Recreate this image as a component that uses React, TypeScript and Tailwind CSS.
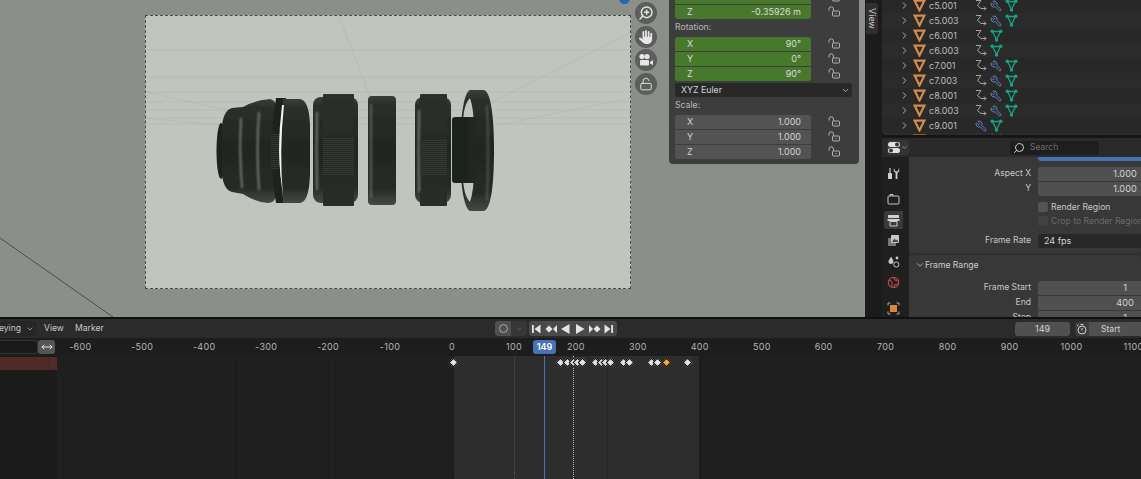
import React from 'react';
import { FaHand } from 'react-icons/fa6';
import { LockOpen, Search, ZoomIn, Wrench, ChevronDown, ChevronRight, MoveHorizontal } from 'lucide-react';

const FONT = "font-['Inter','Liberation_Sans',sans-serif]";

const LockIcon = () => (
    <svg width="13" height="11" viewBox="0 0 13 11" fill="none" stroke="#b4b4b4" strokeWidth="1">
        <path d="M1 4.5V3a2.2 2.2 0 0 1 4.4 0v2" />
        <rect x="4.5" y="5" width="7" height="5" rx="1" />
        <path d="M8 7v1" />
    </svg>
);

const NField = ({ label, value, green, edge }: { label: string; value: string; green?: boolean; edge?: string }) => (
    <div className="flex items-center h-[15px]">
        <div className={`w-[136px] h-[14px] flex items-center justify-between pl-[12px] pr-[10px] text-[9px] ${green ? "bg-[#48782c] text-[#dcdcdc]" : "bg-[#535353] text-[#d4d4d4]"} ${edge ?? ""}`}>
            <span>{label}</span>
            <span>{value}</span>
        </div>
        <div className="ml-[17px]"><LockIcon /></div>
    </div>
);

const TriObject = () => (
    <svg width="13" height="13" viewBox="0 0 13 13" fill="none" stroke="#d38c4a" strokeWidth="2.2">
        <path d="M1.6 1.6H11.4L6.5 11.4Z" />
    </svg>
);

const MeshData = () => (
    <svg width="13" height="13" viewBox="0 0 13 13" fill="none" stroke="#15a583" strokeWidth="1.3">
        <path d="M2.5 2.5H10.5L6.5 10.5Z" />
        <circle cx="2.2" cy="2.2" r="1.7" fill="#15a583" stroke="none" />
        <circle cx="10.8" cy="2.2" r="1.7" fill="#15a583" stroke="none" />
        <circle cx="6.5" cy="11" r="1.7" fill="#15a583" stroke="none" />
    </svg>
);

const AnimArrow = () => (
    <svg width="12" height="13" viewBox="0 0 12 13" fill="none" stroke="#a6a6a6" strokeWidth="1">
        <path d="M1 1.5H6L2.5 6.5 6 9.5H11M9 7.5l2 2-2 2" />
    </svg>
);

const Mod = () => <Wrench size={12} color="#6184c4" strokeWidth={2} className="-scale-x-100" />;

const outlinerRows = [
    { name: "c5.001", anim: true, mod: true },
    { name: "c5.003", anim: true, mod: true },
    { name: "c6.001", anim: true, mod: false },
    { name: "c6.003", anim: true, mod: false },
    { name: "c7.001", anim: true, mod: true },
    { name: "c7.003", anim: true, mod: true },
    { name: "c8.001", anim: true, mod: true },
    { name: "c8.003", anim: true, mod: true },
    { name: "c9.001", anim: false, mod: true },
    { name: "", anim: false, mod: true },
];

const ticks = [-600, -500, -400, -300, -200, -100, 0, 100, 200, 300, 400, 500, 600, 700, 800, 900, 1000, 1100];
const keys = [453, 560, 567, 573, 577, 582, 595, 601, 605, 610, 623, 629, 651, 657, 687];
const frameX = (f: number) => 452 + f * 0.6195;

const Lens = () => (
    <g>
        <defs>
            <linearGradient id="metal" x1="0" y1="0" x2="0" y2="1">
                <stop offset="0" stopColor="#3a3e3a" />
                <stop offset="0.08" stopColor="#2b2f2b" />
                <stop offset="0.45" stopColor="#232723" />
                <stop offset="0.85" stopColor="#262a26" />
                <stop offset="1" stopColor="#454a45" />
            </linearGradient>
            <linearGradient id="band" x1="0" y1="0" x2="0" y2="1">
                <stop offset="0" stopColor="#2c302c" />
                <stop offset="0.5" stopColor="#272b27" />
                <stop offset="1" stopColor="#292d29" />
            </linearGradient>
            <pattern id="knurl" width="3" height="2" patternUnits="userSpaceOnUse">
                <rect width="3" height="1" fill="#343834" />
            </pattern>
            <filter id="soft"><feGaussianBlur stdDeviation="0.9" /></filter>
            <filter id="softer"><feGaussianBlur stdDeviation="0.6" /></filter>
        </defs>

        <g filter="url(#softer)">
            <ellipse cx="221" cy="151" rx="4.5" ry="28" fill="#1d211d" />
            <path d="M222 125Q224 110 232 108L243 107Q255 100 270 99Q276 100 278 110L278 190Q276 203 268 203Q255 202 243 194L232 192Q224 190 222 175Z" fill="url(#metal)" />
            <path d="M276 98H286Q279 125 279 150Q279 178 286 203H276Q268 150 276 98Z" fill="#1c201c" />
            <rect x="271" y="134" width="8" height="36" fill="url(#knurl)" />
            <path d="M283 99H300Q309 100 310 125V175Q309 202 300 203H283Q278 150 283 99Z" fill="url(#metal)" />
            <path d="M282 105Q276 150 283 197Q279 150 284 105Z" fill="#f2f4f0" />

            <rect x="313" y="97" width="45" height="106" rx="8" fill="url(#metal)" />
            <rect x="323" y="94" width="31" height="112" rx="1" fill="url(#band)" />
            <rect x="323" y="138" width="31" height="38" fill="url(#knurl)" />

            <rect x="368" y="96" width="28" height="109" rx="4" fill="url(#metal)" />

            <rect x="415" y="97" width="36" height="106" rx="8" fill="url(#metal)" />
            <rect x="420" y="94" width="27" height="112" rx="1" fill="url(#band)" />
            <rect x="422" y="140" width="25" height="36" fill="url(#knurl)" />

            <path d="M470 90H484C492 92 494 125 494 150C494 178 492 208 484 211H470C463 208 460 178 460 150C460 125 463 92 470 90Z" fill="url(#metal)" />
            <path d="M470 98Q463 105 463 125V175Q463 195 470 202Q474 190 474 170V130Q474 110 470 98Z" fill="#c1c5be" />
            <rect x="452" y="117" width="18" height="66" rx="3" fill="#1f231f" />
            <rect x="468" y="117" width="8" height="66" fill="#232723" />
        </g>

        <g filter="url(#soft)" stroke="#9ba09b" fill="none" strokeWidth="1.3">
            <path d="M241 118Q239 150 242 188" />
            <path d="M259 112Q256 150 259 190" />
            <path d="M317 112Q316 150 317 190" />
            <path d="M371 104V198" strokeOpacity="0.7" />
            <path d="M419 110Q418 150 419 192" />
            <path d="M487 105Q489 150 487 200" strokeOpacity="0.5" />
        </g>
    </g>
);

const gridLines = [
    "M0 50H865", "M0 77H865", "M0 92H865", "M0 102H865", "M0 110H865", "M0 118H865", "M0 124H865",
    "M0 58L260 118", "M0 105L220 125", "M333 0L370 97", "M630 33L492 102", "M630 98L500 125",
];

const Viewport = () => (
    <div className="relative w-[865px] h-[317px] shrink-0 bg-[#8b8f8a] overflow-hidden">
        <div className="ml-[145px] mt-[15px] w-[486px] h-[274px] bg-[#c1c5be] border border-dashed border-[#4a4c4a]" />

        <svg className="absolute inset-0" width="865" height="317" viewBox="0 0 865 317" fill="none">
            {gridLines.map((d, i) => <path key={i} d={d} stroke="#858985" strokeOpacity="0.14" />)}
            <path d="M0 238L113 317" stroke="#4a4d4a" />
            <Lens />
        </svg>

        <div className="absolute left-[619px] -top-[7px] w-[11px] h-[11px] rounded-full bg-[#2a64b4]" />

        <div className="absolute left-[635px] top-[2px] flex flex-col gap-[1.5px]">
            <Gizmo><ZoomIn size={16} strokeWidth={2.2} className="-scale-x-100" /></Gizmo>
            <Gizmo><FaHand size={14} /></Gizmo>
            <Gizmo>
                <svg width="16" height="14" viewBox="0 0 16 14" fill="#e6e6e6">
                    <circle cx="4" cy="3.5" r="2.6" />
                    <circle cx="9" cy="3.5" r="2.6" />
                    <rect x="2" y="7" width="9" height="5.5" rx="1" />
                    <path d="M12 9L15 7V12L12 10.5Z" />
                </svg>
            </Gizmo>
            <Gizmo><LockOpen size={14} strokeWidth={1.6} /></Gizmo>
        </div>

        <div className="absolute left-[669px] -top-[30px] w-[190px] h-[194px] rounded-[4px] bg-[#3d3d3d] px-[6px] pt-[19px] flex flex-col text-[#c4c4c4]">
            <NField label="" value="" green />
            <NField label="Z" value="-0.35926 m" green edge="rounded-b-[3px]" />
            <div className="h-[2px]" />
            <div className="text-[8.7px] leading-[13px] text-[#b8b8b8]">Rotation:</div>
            <div className="h-[2px]" />
            <NField label="X" value="90°" green edge="rounded-t-[3px]" />
            <NField label="Y" value="0°" green />
            <NField label="Z" value="90°" green edge="rounded-b-[3px]" />
            <div className="h-[2px]" />
            <div className="w-[177px] h-[14px] rounded-[3px] bg-[#282828] flex items-center justify-between pl-[6px] pr-[2px] text-[8.8px] text-[#d4d4d4]">
                <span>XYZ Euler</span>
                <ChevronDown size={9} />
            </div>
            <div className="h-[2px]" />
            <div className="text-[8.7px] leading-[13px] text-[#b8b8b8]">Scale:</div>
            <div className="h-[2px]" />
            <NField label="X" value="1.000" edge="rounded-t-[3px]" />
            <NField label="Y" value="1.000" />
            <NField label="Z" value="1.000" edge="rounded-b-[3px]" />
        </div>
    </div>
);

const Gizmo = ({ children }: { children: React.ReactNode }) => (
    <div className="w-[22px] h-[22px] rounded-full bg-[#5b5e5b] text-[#e6e6e6] flex items-center justify-center">{children}</div>
);

const ViewTab = () => (
    <div className="w-[17px] shrink-0 h-[317px] bg-[#1b1b1b] pl-[1px] pt-[3px]">
        <div className="w-[12px] h-[31px] bg-[#303030] rounded-r-[3px] flex items-center justify-center">
            <span className="[writing-mode:vertical-rl] text-[9px] text-[#c8c8c8]">View</span>
        </div>
    </div>
);

const Outliner = () => (
    <div className="h-[135px] shrink-0 bg-[#282828] rounded-bl-[4px] overflow-hidden">
        <div className="-mt-[2px]">
            {outlinerRows.map((row, i) => (
                <div key={i} className={`flex items-center h-[15px] ${i % 2 ? "bg-[#2b2b2b]" : "bg-[#282828]"}`}>
                    <ChevronRight size={11} color="#bdbdbd" className="ml-[17px] shrink-0" />
                    <div className="ml-[3px] shrink-0"><TriObject /></div>
                    <span className="ml-[3px] w-[46px] shrink-0 text-[9px] text-[#bcbcbc]">{row.name}</span>
                    <div className="flex items-center gap-[3px]">
                        {row.anim && <AnimArrow />}
                        {row.mod && <Mod />}
                        <MeshData />
                    </div>
                </div>
            ))}
        </div>
    </div>
);

const TabIcon = ({ children, active, mt }: { children: React.ReactNode; active?: boolean; mt: string }) => (
    <div className={`w-[19px] h-[18px] shrink-0 rounded-l-[3px] flex items-center justify-center ${mt} ${active ? "bg-[#3a3a3a]" : ""}`}>{children}</div>
);

const PropsTabs = () => (
    <div className="w-[27px] shrink-0 bg-[#1f1f1f] pl-[2px] pt-[7px] flex flex-col overflow-hidden">
        <TabIcon mt="mt-0">
            <svg width="13" height="13" viewBox="0 0 13 13" fill="#cfcfcf">
                <rect x="1" y="6" width="4" height="6" rx="0.5" />
                <rect x="2.4" y="1" width="1.2" height="5" />
                <path d="M7 1L8 4 9.5 4.5 11 4 12 1 12.4 4 10.4 6V12H8.6V6L6.6 4Z" />
            </svg>
        </TabIcon>
        <TabIcon mt="mt-[8px]">
            <svg width="13" height="12" viewBox="0 0 13 12" fill="none" stroke="#c8c8c8" strokeWidth="1">
                <rect x="1" y="3" width="11" height="8" rx="1" />
                <path d="M3 3V1.5H6V3" />
            </svg>
        </TabIcon>
        <TabIcon mt="mt-[3px]" active>
            <svg width="13" height="13" viewBox="0 0 13 13" fill="#d0d0d0">
                <rect x="1" y="1" width="11" height="3" rx="0.5" />
                <rect x="0.5" y="5" width="12" height="2" />
                <path d="M3 7.5H10V12H3Z" fill="none" stroke="#d0d0d0" />
            </svg>
        </TabIcon>
        <TabIcon mt="mt-[2px]">
            <svg width="13" height="13" viewBox="0 0 13 13" fill="none">
                <rect x="1" y="4" width="8" height="8" fill="#777" />
                <rect x="4" y="1" width="8" height="8" rx="1" fill="#c8c8c8" />
                <path d="M5 8L7.5 4.5 9 6.5 10 5.5 11.5 8Z" fill="#444" />
            </svg>
        </TabIcon>
        <TabIcon mt="mt-[3px]">
            <svg width="13" height="13" viewBox="0 0 13 13" fill="#c8c8c8">
                <path d="M4 1.5C5.5 4 6.5 5 6.5 7A2.6 2.6 0 0 1 1.4 7C1.4 5 3 4 4 1.5Z" />
                <circle cx="10" cy="3" r="1.4" />
                <circle cx="9.3" cy="9.5" r="2.6" fill="none" stroke="#c8c8c8" />
            </svg>
        </TabIcon>
        <TabIcon mt="mt-[3px]">
            <svg width="13" height="13" viewBox="0 0 13 13" fill="none" stroke="#b34c4c" strokeWidth="1.2">
                <circle cx="6.5" cy="6.5" r="5.2" />
                <path d="M2 4C5 5 6 7 4.5 11M7 1.5C7 4 9 5 11.5 5M7 11.5C7 9 9 8 11 8" />
            </svg>
        </TabIcon>
        <TabIcon mt="mt-[8px]">
            <svg width="13" height="13" viewBox="0 0 13 13" fill="none">
                <rect x="3" y="3" width="7" height="7" fill="#d9873e" />
                <path d="M1 3.5V1H3.5M9.5 1H12V3.5M12 9.5V12H9.5M3.5 12H1V9.5" stroke="#a8a8a8" />
            </svg>
        </TabIcon>
    </div>
);

const PropRow = ({ label, value, edge }: { label: string; value: string; edge?: string }) => (
    <div className="flex items-center h-[15px]">
        <span className="w-[122px] shrink-0 whitespace-nowrap text-right text-[8.6px] text-[#c6c6c6]">{label}</span>
        <div className={`ml-[7px] w-[174px] h-[14px] shrink-0 bg-[#505050] text-center text-[9.2px] leading-[14px] text-[#d4d4d4] ${edge ?? ""}`}>{value}</div>
    </div>
);

const Properties = () => (
    <div className="flex-1 flex flex-col min-h-0 mt-[3px]">
        <div className="h-[19px] shrink-0 bg-[#2a2a2a] flex items-center">
            <div className="ml-[5px] w-[22px] h-[15px] rounded-[3px] bg-[#343434] flex items-center justify-center gap-[1px]">
                <svg width="12" height="11" viewBox="0 0 12 11">
                    <rect x="0" y="0" width="12" height="5" rx="2.5" fill="#e0e0e0" />
                    <circle cx="9" cy="2.5" r="2" fill="#333" />
                    <rect x="0" y="6" width="12" height="5" rx="2.5" fill="#e0e0e0" />
                    <circle cx="3" cy="8.5" r="2" fill="#333" />
                </svg>
                <ChevronDown size={7} color="#ccc" />
            </div>
            <div className="ml-[101px] w-[89px] h-[14px] rounded-[3px] bg-[#1e1e1e] flex items-center pl-[3px] gap-[5px]">
                <Search size={12} color="#d0d0d0" className="-scale-x-100" />
                <span className="text-[8.5px] text-[#6c6c6c]">Search</span>
            </div>
        </div>
        <div className="flex-1 flex min-h-0 overflow-hidden">
            <PropsTabs />
            <div className="flex-1 min-w-0 bg-[#2f2f2f] overflow-hidden">
                <div className="h-[96px] bg-[#383838] rounded-b-[4px]">
                    <div className="flex h-[4px]">
                        <div className="ml-[129px] w-[174px] shrink-0 h-[4px] bg-[#4772b3] rounded-b-[3px]" />
                    </div>
                    <div className="h-[5px]" />
                    <PropRow label="Aspect X" value="1.000" edge="rounded-t-[3px]" />
                    <PropRow label="Y" value="1.000" edge="rounded-b-[3px]" />
                    <div className="h-[4px]" />
                    <div className="flex items-center h-[14px] pl-[129px] text-[8.6px] text-[#c6c6c6] whitespace-nowrap">
                        <div className="w-[10px] h-[10px] shrink-0 rounded-[2px] bg-[#545454] mr-[3px]" />
                        Render Region
                    </div>
                    <div className="flex items-center h-[14px] pl-[129px] text-[8.6px] text-[#6a6a6a] whitespace-nowrap">
                        <div className="w-[10px] h-[10px] shrink-0 rounded-[2px] bg-[#424242] mr-[3px]" />
                        Crop to Render Region
                    </div>
                    <div className="h-[5px]" />
                    <div className="flex items-center h-[15px]">
                        <span className="w-[122px] shrink-0 text-right text-[8.6px] text-[#c6c6c6]">Frame Rate</span>
                        <div className="ml-[7px] w-[174px] h-[14px] shrink-0 rounded-[3px] bg-[#282828] pl-[6px] text-[9px] leading-[14px] text-[#d4d4d4]">24 fps</div>
                    </div>
                </div>
                <div className="h-[2px]" />
                <div className="bg-[#383838] rounded-t-[4px] pt-[1px]">
                    <div className="flex items-center h-[18px] pl-[6px] text-[8.6px] text-[#cccccc]">
                        <ChevronDown size={10} color="#c0c0c0" />
                        Frame Range
                    </div>
                    <div className="h-[6px]" />
                    <PropRow label="Frame Start" value="1" edge="rounded-t-[3px]" />
                    <PropRow label="End" value="400" />
                    <PropRow label="Step" value="1" />
                </div>
            </div>
        </div>
    </div>
);

const TransportBtn = ({ d }: { d: string }) => (
    <div className="w-[14.6px] h-full flex items-center justify-center">
        <svg width="12" height="12" viewBox="0 0 12 12" fill="#e4e4e4"><path d={d} /></svg>
    </div>
);

const TimelineHeader = () => (
    <div className="h-[19px] bg-[#2b2b2b] flex items-center text-[8.6px] text-[#c8c8c8] whitespace-nowrap overflow-hidden">
        <div className="-ml-[10px] w-[46px] h-[15px] shrink-0 rounded-[3px] bg-[#262626] flex items-center justify-end pr-[2px] gap-[5px]">
            Keying
            <ChevronDown size={8} />
        </div>
        <span className="ml-[8px] w-[31px] shrink-0">View</span>
        <span className="w-[40px] shrink-0">Marker</span>
        <div className="ml-[380px] w-[32px] h-[15px] shrink-0 flex rounded-[3px] overflow-hidden">
            <div className="w-[16px] bg-[#4f4f4f] flex items-center justify-center">
                <div className="w-[9px] h-[9px] rounded-full border border-[#a8a8a8]" />
            </div>
            <div className="w-[16px] bg-[#363636] flex items-center justify-center"><ChevronDown size={8} color="#707070" /></div>
        </div>
        <div className="ml-[2px] w-[88px] h-[15px] shrink-0 rounded-[3px] bg-[#4a4a4a] flex">
            <TransportBtn d="M2 2H3.8V10H2ZM10.5 1.5V10.5L4.5 6Z" />
            <TransportBtn d="M0.5 6L4 2.5 7.5 6 4 9.5ZM12 2V10L8 6Z" />
            <TransportBtn d="M10.5 1V11L2 6Z" />
            <TransportBtn d="M2 1V11L10.5 6Z" />
            <TransportBtn d="M0 2V10L4 6ZM8 2.5L11.5 6 8 9.5 4.5 6Z" />
            <TransportBtn d="M1.5 1.5V10.5L7.5 6ZM8.2 2H10V10H8.2Z" />
        </div>
        <div className="ml-[398px] w-[55px] h-[14px] shrink-0 rounded-[3px] bg-[#505050] text-center text-[9px] leading-[14px] text-[#d4d4d4]">149</div>
        <div className="ml-[5px] w-[14px] h-[14px] shrink-0 bg-[#3c3c3c] rounded-l-[3px] flex items-center justify-center">
            <svg width="12" height="12" viewBox="0 0 12 12" fill="none" stroke="#d0d0d0">
                <circle cx="6" cy="7" r="4" />
                <path d="M6 5V7.5M4.5 1.5H7.5M1 3L2.5 1.8" />
            </svg>
        </div>
        <div className="w-[52px] h-[14px] shrink-0 bg-[#505050] pl-[12px] leading-[14px] text-[#d4d4d4]">Start</div>
    </div>
);

const Ruler = () => (
    <div className="relative h-[18px] bg-[#1d1d1d] text-[9px] text-[#b4b4b4]">
        <div className="absolute left-0 top-[2px] w-[38px] h-[14px] bg-[#1a1a1a] border-y border-r border-[#333] rounded-r-[3px]" />
        <div className="absolute left-[38px] top-[2px] w-[17px] h-[14px] rounded-[3px] bg-[#555] flex items-center justify-center">
            <MoveHorizontal size={12} color="#e0e0e0" />
        </div>
        {ticks.map(t => (
            <span key={t} className="absolute top-[3px] -translate-x-1/2 leading-[12px] tracking-[0.3px]" style={{ left: frameX(t) }}>{t < 0 ? `-${-t}` : t}</span>
        ))}
        <div className="absolute left-[533px] top-[2px] w-[23px] h-[14px] rounded-[3px] bg-[#4772b3] text-center leading-[14px] text-white font-semibold">149</div>
    </div>
);

const Dopesheet = () => {
    const grid = Array.from({ length: 37 }, (_, i) => -100 + i * 3);
    return (
        <div className="relative flex-1 flex bg-[#1f1f1f] overflow-hidden">
            <div className="w-[57px] shrink-0 bg-[#1c1c1c] pt-[1px]">
                <div className="h-[13px] bg-[#512a2a]" />
            </div>
            <div className="relative flex-1">
                <div className="absolute top-0 bottom-0 left-[396px] w-[246px] bg-[#2d2d2d]" />
                {grid.map(i => (
                    <div key={i} className="absolute top-0 bottom-0 w-px bg-[#151515] opacity-25" style={{ left: frameX(i * 50) - 57 }} />
                ))}
                <div className="absolute top-0 bottom-0 left-[396px] w-0 border-l border-dotted border-[#0c0c0c]" />
                <div className="absolute top-0 bottom-0 left-[457px] w-0 border-l border-dotted border-[#5a5a5a]" />
                <div className="absolute top-0 bottom-0 left-[516px] w-0 border-l border-dotted border-[#b4b4b4]" />
                <div className="absolute top-0 bottom-0 left-[487px] w-px bg-[#4772b3]" />
                {keys.map(x => (
                    <div key={x} className="absolute top-[3px] w-[7px] h-[7px] rotate-45 bg-[#e2e2e2] border border-black" style={{ left: x - 57 - 3.5 }} />
                ))}
                <div className="absolute top-[3px] left-[605.5px] w-[7px] h-[7px] rotate-45 bg-[#f2aa2e] border border-black" />
            </div>
        </div>
    );
};

export default function App() {
    return (
        <div className={`w-[1141px] h-[479px] overflow-hidden bg-[#151515] flex flex-col ${FONT}`}>
            <div className="flex h-[317px] shrink-0">
                <Viewport />
                <ViewTab />
                <div className="w-[259px] shrink-0 flex flex-col">
                    <Outliner />
                    <Properties />
                </div>
            </div>
            <div className="h-[2px] shrink-0 bg-[#101010]" />
            <div className="flex-1 flex flex-col min-h-0">
                <TimelineHeader />
                <Ruler />
                <Dopesheet />
            </div>
        </div>
    );
}
